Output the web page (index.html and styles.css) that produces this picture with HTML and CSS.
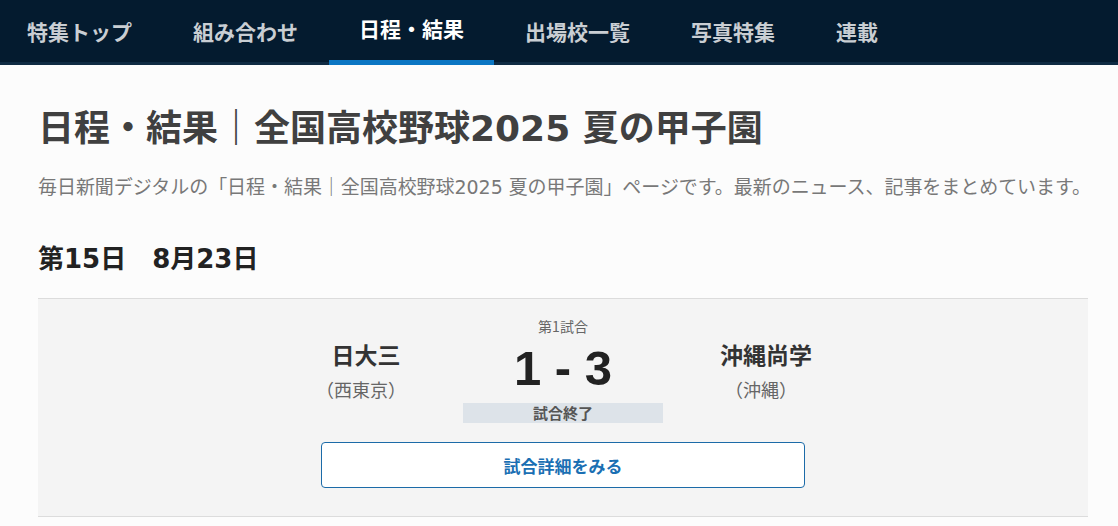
FILE: index.html
```html
<!DOCTYPE html>
<html lang="ja">
<head>
<meta charset="utf-8">
<title>日程・結果｜全国高校野球2025 夏の甲子園</title>
<link rel="stylesheet" href="styles.css">
</head>
<body>
<nav class="gnav">
  <ul class="gnav-list">
    <li class="gnav-item">特集トップ</li>
    <li class="gnav-item">組み合わせ</li>
    <li class="gnav-item is-active">日程・結果</li>
    <li class="gnav-item">出場校一覧</li>
    <li class="gnav-item">写真特集</li>
    <li class="gnav-item">連載</li>
  </ul>
</nav>
<main class="main">
  <h1 class="page-title">日程・結果｜全国高校野球2025 夏の甲子園</h1>
  <p class="page-desc">毎日新聞デジタルの「日程・結果｜全国高校野球2025 夏の甲子園」ページです。最新のニュース、記事をまとめています。</p>
  <h2 class="day-title">第15日　8月23日</h2>
  <section class="match-card">
    <div class="match-row">
      <div class="team">
        <div class="team-name">日大三</div>
        <div class="team-pref">（西東京）</div>
      </div>
      <div class="score-box">
        <div class="match-no">第1試合</div>
        <div class="score">1 - 3</div>
        <div class="status">試合終了</div>
      </div>
      <div class="team">
        <div class="team-name">沖縄尚学</div>
        <div class="team-pref">（沖縄）</div>
      </div>
    </div>
    <a class="detail-btn">試合詳細をみる</a>
  </section>
</main>
</body>
</html>
```

FILE: styles.css
```css
* { box-sizing: border-box; }
html, body { margin: 0; padding: 0; }
body {
  background: #fcfcfc;
  font-family: "DejaVu Sans", "Noto Sans CJK JP", sans-serif;
  color: #333;
}
.gnav {
  background: #041b2f;
  border-bottom: 3px solid #0f2b43;
  height: 65px;
  overflow: visible;
}
.gnav-list {
  list-style: none;
  margin: 0 0 0 -3px;
  padding: 0;
  display: flex;
  gap: 1px;
  height: 62px;
}
.gnav-item {
  font-family: "Noto Sans CJK JP", sans-serif;
  font-weight: 700;
  font-size: 21px;
  color: #c9ced3;
  padding: 0 30px;
  display: flex;
  align-items: center;
  height: 62px;
  padding-bottom: 1px;
}
.gnav-item.is-active {
  color: #ffffff;
  height: 65px;
  border-bottom: 5px solid #0b76c3;
  padding-bottom: 4px;
}
.main {
  padding: 0 30px 0 38px;
}
.page-title {
  margin: 0;
  padding-top: 42px;
  font-size: 36px;
  line-height: 44px;
  font-weight: 700;
  color: #404040;
  white-space: nowrap;
}
.page-desc {
  margin: 22px 0 0;
  font-size: 19px;
  line-height: 28px;
  color: #787878;
  white-space: nowrap;
  letter-spacing: -0.05px;
}
.day-title {
  margin: 42px 0 0;
  font-size: 26px;
  line-height: 32px;
  font-weight: 700;
  color: #222;
}
.match-card {
  margin-top: 23px;
  background: #f4f4f4;
  border-top: 1px solid #dcdcdc;
  border-bottom: 1px solid #dcdcdc;
  padding: 18px 0 28px;
  display: flex;
  flex-direction: column;
  align-items: center;
}
.match-row {
  display: grid;
  grid-template-columns: 200px 200px 200px;
  align-items: start;
}
.team {
  display: flex;
  flex-direction: column;
  align-items: center;
  padding-left: 6px;
  padding-top: 22px;
}
.team-name {
  font-family: "Noto Sans CJK JP", sans-serif;
  font-size: 23px;
  line-height: 30px;
  font-weight: 700;
  color: #333;
}
.team-pref {
  margin-top: 8px;
  font-family: "Noto Sans CJK JP", sans-serif;
  font-size: 18px;
  line-height: 24px;
  color: #666;
  margin-left: -10px;
}
.score-box {
  display: flex;
  flex-direction: column;
  align-items: stretch;
  text-align: center;
}
.match-no {
  font-family: "Noto Sans CJK JP", sans-serif;
  font-size: 14px;
  line-height: 18px;
  color: #666;
}
.score {
  font-family: "Liberation Sans", Arial, sans-serif;
  font-size: 49px;
  line-height: 56px;
  font-weight: 700;
  color: #222;
  margin-top: 5px;
}
.status {
  margin-top: 7px;
  background: #dde3e9;
  height: 20px;
  font-family: "Noto Sans CJK JP", sans-serif;
  font-size: 15px;
  line-height: 20px;
  font-weight: 700;
  color: #555;
}
.detail-btn {
  margin-top: 19px;
  width: 484px;
  height: 46px;
  background: #fff;
  border: 1px solid #1c6ba8;
  border-radius: 4px;
  display: flex;
  align-items: center;
  justify-content: center;
  font-family: "Noto Sans CJK JP", sans-serif;
  font-size: 17px;
  font-weight: 700;
  color: #1a6fb3;
  text-decoration: none;
}
```
